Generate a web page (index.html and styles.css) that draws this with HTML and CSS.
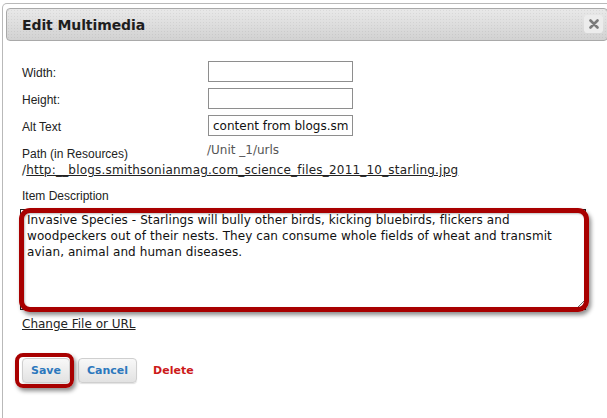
FILE: index.html
```html
<!DOCTYPE html>
<html lang="en">
<head>
<meta charset="utf-8">
<title>Edit Multimedia</title>
<link rel="stylesheet" href="styles.css">
</head>
<body>
<div class="dialog">
  <div class="titlebar">
    <h1 class="title">Edit Multimedia</h1>
    <button class="close" type="button" aria-label="Close">
      <svg width="10" height="10" viewBox="0 0 10 10"><path d="M1.5 1.5 L8.5 8.5 M8.5 1.5 L1.5 8.5" stroke="#7a7a7a" stroke-width="2.6" stroke-linecap="round"/></svg>
    </button>
  </div>
  <form class="form">
    <div class="fields">
      <label class="label" for="w">Width:</label><input class="field" id="w" type="text">
      <label class="label" for="h">Height:</label><input class="field" id="h" type="text">
      <label class="label" for="alt">Alt Text</label><input class="field" id="alt" type="text" value="content from blogs.smithsonianmag.com">
    </div>
    <div class="path-row">
      <span class="label">Path (in Resources)</span>
      <span class="unit">/Unit _1/urls</span>
    </div>
    <div class="path-link">/<a href="#" class="link">http:__blogs.smithsonianmag.com_science_files_2011_10_starling.jpg</a></div>
    <div class="label desc-label">Item Description</div>
    <div class="desc-wrap">
      <textarea class="desc">Invasive Species - Starlings will bully other birds, kicking bluebirds, flickers and woodpeckers out of their nests. They can consume whole fields of wheat and transmit avian, animal and human diseases.</textarea>
    </div>
    <a href="#" class="link change">Change File or URL</a>
    <div class="actions">
      <span class="save-wrap"><button type="button" class="btn">Save</button></span>
      <button type="button" class="btn">Cancel</button>
      <a href="#" class="delete">Delete</a>
    </div>
  </form>
</div>
</body>
</html>
```
FILE: styles.css
```css
html, body {
  margin: 0;
  padding: 0;
  background: #ffffff;
  overflow: hidden;
}
body {
  font-family: "DejaVu Sans", Verdana, sans-serif;
  color: #222;
  height: 418px;
}
.dialog {
  box-sizing: border-box;
  margin: 3px 0 0 2px;
  width: 610px;
  height: 415px;
  overflow: hidden;
  border: 1px solid #b9b9b9;
  border-bottom: none;
  border-radius: 5px 5px 0 0;
  padding: 4px 3px 0 3px;
}
.titlebar {
  height: 31px;
  border: 1px solid #a9a9a9;
  border-radius: 4px;
  background:
    radial-gradient(circle, rgba(0,0,0,0.06) 0.6px, transparent 0.8px) 0 0 / 3px 3px,
    linear-gradient(#e9e9e9, #d2d2d2);
  display: flex;
  align-items: center;
  justify-content: space-between;
  padding: 0 4px 0 15px;
}
.title {
  margin: 0;
  font-family: "DejaVu Sans", Verdana, sans-serif;
  font-size: 14px;
  font-weight: bold;
  color: #1e1e1e;
  letter-spacing: -0.1px;
}
.close {
  width: 19px;
  height: 18px;
  padding: 0;
  border: none;
  border-radius: 3px;
  background: #ececec;
  display: flex;
  align-items: center;
  justify-content: center;
  margin-top: -1px;
}
.form {
  padding: 20px 0 0 16px;
  display: flex;
  flex-direction: column;
  align-items: flex-start;
}
.label {
  font-family: "Liberation Sans", Arial, sans-serif;
  font-size: 12px;
  line-height: 15px;
  color: #222;
}
.fields {
  display: grid;
  grid-template-columns: 186px 145px;
  row-gap: 6px;
  align-items: center;
}
.fields .label {
  padding-top: 3px;
}
.field {
  box-sizing: border-box;
  height: 21px;
  width: 145px;
  border: 1px solid #8e8e8e;
  margin: 0;
  padding: 0 4px;
  font-family: "DejaVu Sans", Verdana, sans-serif;
  font-size: 12px;
  color: #111;
  background: #fff;
}
.path-row {
  display: grid;
  grid-template-columns: 185px auto;
  margin-top: 8px;
  align-items: start;
}
.path-row .label {
  padding-top: 3px;
}
.unit {
  font-size: 12px;
  line-height: 15px;
  color: #555;
  margin-top: -1px;
}
.path-link {
  font-size: 12px;
  line-height: 15px;
  color: #222;
  margin-top: 1px;
  letter-spacing: 0.2px;
}
.link {
  color: #222;
  text-decoration: underline;
}
.desc-label {
  margin-top: 11px;
}
.desc-wrap {
  position: relative;
  margin: 5px 0 0 -2px;
}
.desc-wrap::after {
  content: "";
  position: absolute;
  left: -1px;
  top: -1px;
  right: -3px;
  bottom: -2px;
  border: 5px solid #a80000;
  border-radius: 11px;
  box-shadow: 2px 3px 4px rgba(0,0,0,0.45), inset 1px 1px 2px rgba(0,0,0,0.25);
  pointer-events: none;
}
.desc {
  display: block;
  box-sizing: border-box;
  width: 566px;
  height: 101px;
  margin: 0;
  border: 1px solid #222;
  padding: 2px 6px;
  font-family: "DejaVu Sans", Verdana, sans-serif;
  font-size: 12px;
  line-height: 16px;
  letter-spacing: 0.08px;
  color: #111;
  background: #fff;
}
.change {
  font-size: 12px;
  line-height: 15px;
  margin-top: 7px;
}
.actions {
  display: flex;
  align-items: center;
  margin-top: 26px;
}
.save-wrap {
  position: relative;
  display: block;
  margin-right: 8px;
}
.save-wrap::after {
  content: "";
  position: absolute;
  left: -7px;
  top: -5px;
  right: -4px;
  bottom: -5px;
  border: 4px solid #a80000;
  border-radius: 8px;
  box-shadow: 2px 3px 4px rgba(0,0,0,0.45);
  pointer-events: none;
}
.btn {
  height: 25px;
  padding: 0 8px;
  border: 1px solid #cfcfcf;
  border-radius: 4px;
  background: linear-gradient(#f8f8f8, #e2e2e2);
  box-shadow: 0 1px 1px rgba(0,0,0,0.12);
  font-family: "DejaVu Sans", Verdana, sans-serif;
  font-size: 11px;
  font-weight: bold;
  color: #2c78bd;
}
.delete {
  margin-left: 16px;
  font-size: 11px;
  font-weight: bold;
  color: #cc1a1a;
  text-decoration: none;
}
```
